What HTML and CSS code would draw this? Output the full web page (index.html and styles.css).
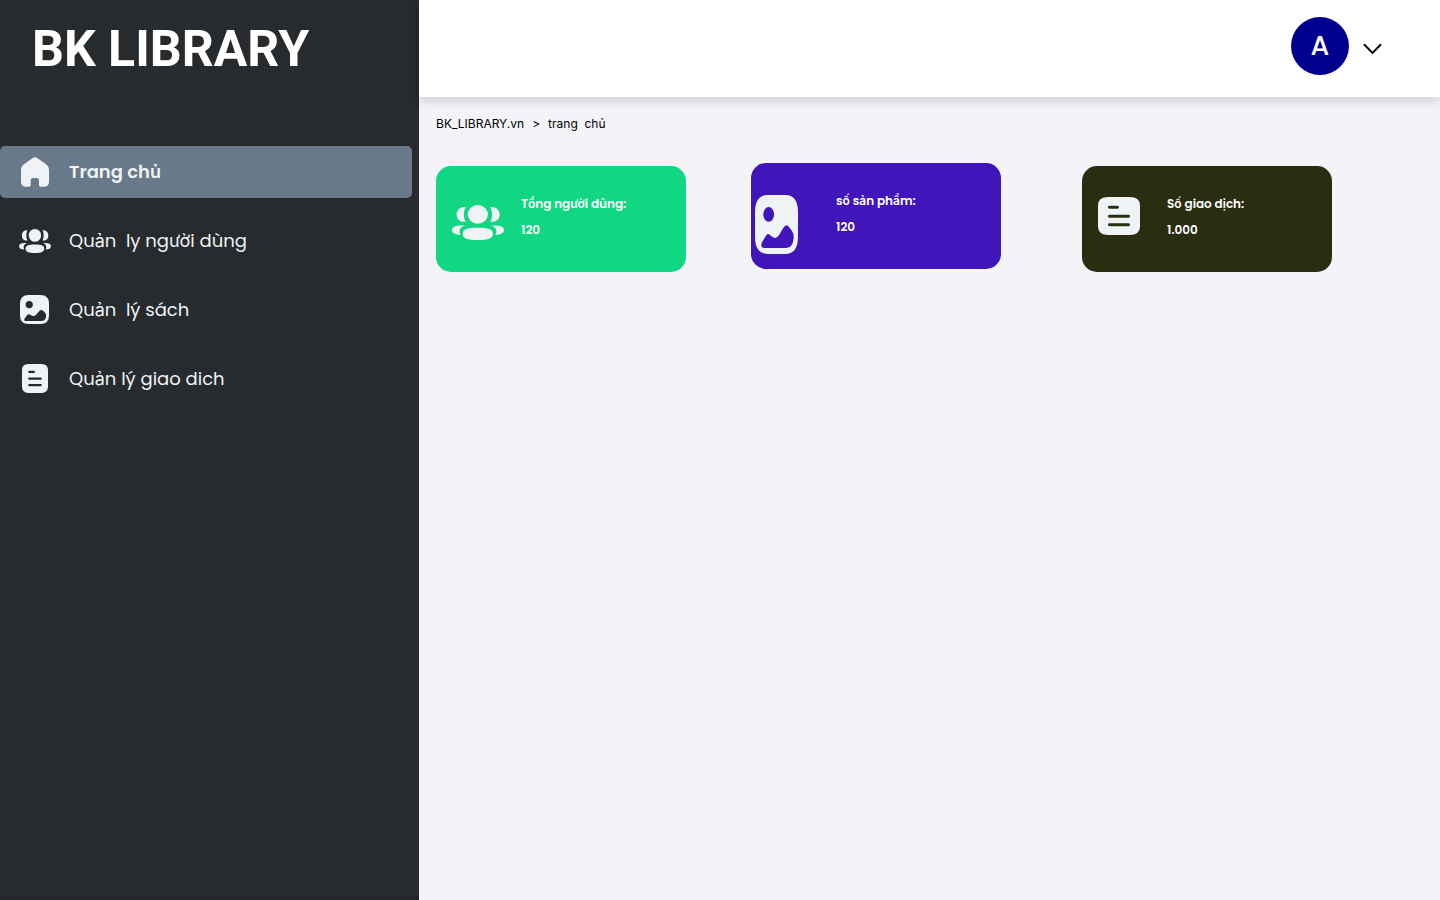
FILE: index.html
```html
<!DOCTYPE html>
<html lang="vi">
<head>
<meta charset="utf-8">
<meta name="viewport" content="width=device-width, initial-scale=1">
<title>BK LIBRARY</title>
<link rel="stylesheet" href="styles.css">
</head>
<body>
<svg class="sprite" aria-hidden="true">
  <symbol id="home" viewBox="0 0 84 90" preserveAspectRatio="none">
    <path d="M34 4Q42-2 50 4L77 23Q84 29 84 38V74Q84 89 68 89H59Q54 89 54 84V71Q54 63 46 63H37Q29 63 29 71V84Q29 89 24 89H16Q0 89 0 74V38Q0 29 7 23Z"/>
  </symbol>
  <symbol id="users" viewBox="0 0 155 105" preserveAspectRatio="none">
    <ellipse cx="77" cy="28" rx="30" ry="28"/>
    <path d="M32 86C32 72 46 68 77 68S122 72 122 86S108 105 77 105S32 100 32 86Z"/>
    <path d="M41 6C34 18 33 38 41 50C25 53 14 44 14 28C14 14 26 4 41 6Z"/>
    <path d="M114 6C121 18 122 38 114 50C130 53 142 44 142 28C142 14 129 4 114 6Z"/>
    <path d="M38 62C23 66 19 78 26 90C10 89 0 84 0 75C0 64 16 60 38 62Z"/>
    <path d="M117 62C132 66 136 78 129 90C145 89 155 84 155 75C155 64 139 60 117 62Z"/>
  </symbol>
  <symbol id="image" viewBox="0 0 88 88" preserveAspectRatio="none">
    <path fill-rule="evenodd" d="M26 0H62Q88 0 88 26V62Q88 88 62 88H26Q0 88 0 62V26Q0 0 26 0ZM28 18A11 11 0 1 0 28 40A11 11 0 1 0 28 18ZM14 71L22 61Q26 56 31 60L37 63Q43 66 49 60L58 49Q64 42 70 48L76 54Q80 58 79 65Q77 79 64 79H20Q10 79 14 71Z"/>
  </symbol>
  <symbol id="document" viewBox="0 0 80 90" preserveAspectRatio="none">
    <path fill-rule="evenodd" d="M20 0H60Q80 0 80 20V70Q80 90 60 90H20Q0 90 0 70V20Q0 0 20 0ZM22 21a3 3.5 0 0 0 0 7H37a3 3.5 0 0 0 0-7ZM22 42a3 3.5 0 0 0 0 7H58a3 3.5 0 0 0 0-7ZM22 62a3 3.5 0 0 0 0 7H58a3 3.5 0 0 0 0-7Z"/>
  </symbol>
</svg>
<div class="layout">
  <aside class="sidebar">
    <h1 class="brand">BK LIBRARY</h1>
    <nav class="nav">
      <a class="nav-link active" href="#"><span class="nav-icon"><svg class="icon-home"><use href="#home"/></svg></span>Trang chủ</a>
      <a class="nav-link" href="#"><span class="nav-icon"><svg class="icon-users"><use href="#users"/></svg></span>Quản  ly người dùng</a>
      <a class="nav-link" href="#"><span class="nav-icon"><svg class="icon-image"><use href="#image"/></svg></span>Quản  lý sách</a>
      <a class="nav-link" href="#"><span class="nav-icon"><svg class="icon-document"><use href="#document"/></svg></span>Quản lý giao dich</a>
    </nav>
  </aside>
  <div class="main">
    <header class="topbar">
      <span class="avatar">A</span>
      <button class="menu-toggle" type="button" aria-label="Menu"><svg class="chevron" viewBox="0 0 20 12"><path d="M1 1L10 10L19 1"/></svg></button>
    </header>
    <main class="content">
      <p class="breadcrumb"><a href="#">BK_LIBRARY.vn</a><span>&gt;</span><span class="crumb">trang  chủ</span></p>
      <div class="cards">
        <section class="card card-users"><div class="card-icon"><svg><use href="#users"/></svg></div><div class="card-text"><h2>Tổng người dùng:</h2><p>120</p></div></section>
        <section class="card card-books"><div class="card-icon"><svg><use href="#image"/></svg></div><div class="card-text"><h2>số sản phẩm:</h2><p>120</p></div></section>
        <section class="card card-deals"><div class="card-icon"><svg><use href="#document"/></svg></div><div class="card-text"><h2>Số giao dịch:</h2><p>1.000</p></div></section>
      </div>
    </main>
  </div>
</div>
</body>
</html>
```
FILE: styles.css
```css
* { box-sizing: border-box; }
body { margin: 0; background: #f3f3f8; font-family: Poppins, Inter, "Noto Sans", sans-serif; }
h1, h2, p { margin: 0; }
a { color: inherit; text-decoration: none; }
svg { display: block; fill: #eff3f6; }
.sprite { display: none; }
.layout { display: flex; min-height: 100vh; }
.sidebar { flex: 0 0 29.1%; background: #272b2e; border-bottom: 4px solid #262329; color: #eff3f6; }
.brand { padding: 19px 0 0 32px; color: #fff; font: 700 50px/60px Roboto, sans-serif; white-space: nowrap; }
.nav { display: flex; flex-direction: column; gap: 17px; padding: 67px 7px 0 0; }
.nav-link { display: flex; align-items: center; height: 52px; padding-bottom: 1px; border-radius: 5px; font-size: 18px; font-weight: 400; white-space: pre; }
.nav-link.active { background: #687a89; font-weight: 600; }
.nav-icon { display: flex; flex: 0 0 69px; justify-content: center; }
.icon-home { width: 28px; height: 30px; }
.icon-users { width: 32px; height: 24px; }
.icon-image { width: 29px; height: 29px; }
.icon-document { width: 26px; height: 29px; }
.main { flex: 1; min-width: 0; }
.topbar { display: flex; align-items: center; justify-content: flex-end; gap: 14px; height: 97px; padding: 0 58px 5px 0; background: #fff; box-shadow: 0 4px 10px rgba(0, 0, 0, 0.15); }
.avatar { display: grid; place-items: center; width: 58px; height: 58px; border-radius: 50%; background: #00008f; color: #fff; font-size: 27px; font-weight: 500; }
.menu-toggle { margin-top: 5px; padding: 0; border: 0; background: none; }
.chevron { width: 19px; height: 12px; fill: none; stroke: #000; stroke-width: 2; }
.content { padding: 18px 17px; }
.breadcrumb { display: flex; gap: 8px; color: #000; font: 12px/18px Inter, sans-serif; }
.crumb { white-space: pre; }
.cards { display: flex; padding-top: 30px; }
.card { display: flex; flex: 0 0 250px; height: 106px; border-radius: 15px; color: #fff; }
.card-icon { flex: 0 0 85px; padding-left: 16px; }
.card-text { padding-top: 25px; }
.card-text h2, .card-text p { font-size: 12px; font-weight: 600; line-height: 26px; white-space: nowrap; }
.card-users { margin: 3px 65px 0 0; background: #11d783; }
.card-users .card-icon { padding-top: 39px; }
.card-users svg { width: 52px; height: 35px; }
.card-books { margin-right: 81px; background: #4016ba; }
.card-books .card-icon { padding: 32px 0 0 4px; }
.card-books svg { width: 43px; height: 59px; }
.card-deals { margin-top: 3px; background: #2b2d10; }
.card-deals .card-icon { padding-top: 31px; }
.card-deals svg { width: 42px; height: 38px; }
```
